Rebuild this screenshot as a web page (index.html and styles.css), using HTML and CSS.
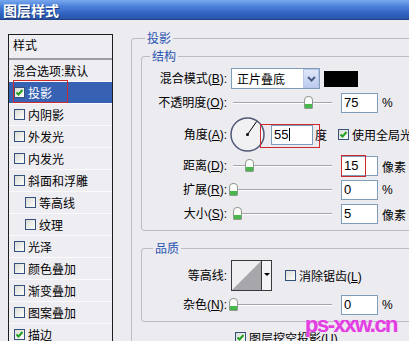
FILE: index.html
```html
<!DOCTYPE html>
<html lang="zh-CN">
<head>
  <meta charset="UTF-8" />
  <title>图层样式</title>
  <link rel="stylesheet" href="styles.css">
</head>
<body>
  <div class="titlebar">图层样式</div>

  <div class="dialog">
    <!-- 左侧样式列表 -->
    <div class="style-list">
      <div class="list-head">样式</div>
      <div class="list-row plain">混合选项:默认</div>
      <div class="list-row selected">
        <span class="chk"><svg width="9" height="9" viewBox="0 0 9 9"><path d="M1.5 4.5l2 2 4-4.5" stroke="#21a121" stroke-width="2" fill="none"/></svg></span>投影
        <span class="mark mark-list"></span>
      </div>
      <div class="list-row"><span class="chk"></span>内阴影</div>
      <div class="list-row"><span class="chk"></span>外发光</div>
      <div class="list-row"><span class="chk"></span>内发光</div>
      <div class="list-row"><span class="chk"></span>斜面和浮雕</div>
      <div class="list-row sub"><span class="chk"></span>等高线</div>
      <div class="list-row sub"><span class="chk"></span>纹理</div>
      <div class="list-row"><span class="chk"></span>光泽</div>
      <div class="list-row"><span class="chk"></span>颜色叠加</div>
      <div class="list-row"><span class="chk"></span>渐变叠加</div>
      <div class="list-row"><span class="chk"></span>图案叠加</div>
      <div class="list-row">
        <span class="chk"><svg width="9" height="9" viewBox="0 0 9 9"><path d="M1.5 4.5l2 2 4-4.5" stroke="#21a121" stroke-width="2" fill="none"/></svg></span>描边
      </div>
    </div>

    <!-- 右侧设置 -->
    <div class="panel">
      <fieldset class="group outer">
        <legend>投影</legend>

        <fieldset class="group inner">
          <legend>结构</legend>
          <div class="form">
            <label class="r1">混合模式(<u>B</u>):</label>
            <div class="ctrl r1">
              <div class="select">
                <span class="select-text">正片叠底</span>
                <span class="select-btn"><svg width="9" height="6" viewBox="0 0 9 6"><path d="M1 1l3.5 3.5L8 1" stroke="#4a5d86" stroke-width="2" fill="none"/></svg></span>
              </div>
              <span class="swatch"></span>
            </div>

            <label>不透明度(<u>O</u>):</label>
            <div class="ctrl">
              <div class="slider"><span class="thumb" style="left:75px"></span></div>
              <span class="num">75</span><span class="unit">%</span>
            </div>

            <label class="r3">角度(<u>A</u>):</label>
            <div class="ctrl r3">
              <svg class="dial" width="35" height="35" viewBox="0 0 35 35">
                <circle cx="17.5" cy="17.5" r="16.5" fill="#f1f1f3" stroke="#4f5876" stroke-width="1.5"/>
                <line x1="17.5" y1="17.5" x2="26.7" y2="4.4" stroke="#000" stroke-width="1"/>
                <circle cx="17.5" cy="17.5" r="1.5" fill="#000"/>
              </svg>
              <span class="marked">
                <span class="num wide">55<span class="caret"></span></span>
                <span class="mark mark-angle"></span>
              </span>
              <span class="deg">度</span>
              <span class="chk"><svg width="9" height="9" viewBox="0 0 9 9"><path d="M1.5 4.5l2 2 4-4.5" stroke="#21a121" stroke-width="2" fill="none"/></svg></span>
              <span class="chk-label">使用全局光</span>
            </div>

            <label>距离(<u>D</u>):</label>
            <div class="ctrl">
              <div class="slider"><span class="thumb" style="left:16px"></span></div>
              <span class="marked">
                <span class="num">15</span>
                <span class="mark mark-dist"></span>
              </span>
              <span class="unit">像素</span>
            </div>

            <label>扩展(<u>R</u>):</label>
            <div class="ctrl">
              <div class="slider"><span class="thumb" style="left:0px"></span></div>
              <span class="num">0</span><span class="unit">%</span>
            </div>

            <label>大小(<u>S</u>):</label>
            <div class="ctrl">
              <div class="slider"><span class="thumb" style="left:4px"></span></div>
              <span class="num">5</span><span class="unit">像素</span>
            </div>
          </div>
        </fieldset>

        <fieldset class="group inner quality">
          <legend>品质</legend>
          <div class="form">
            <label class="r-contour">等高线:</label>
            <div class="ctrl r-contour">
              <div class="contour">
                <svg width="29" height="29" viewBox="0 0 29 29">
                  <rect width="29" height="29" fill="#efeff1"/>
                  <polygon points="0,29 29,0 29,29" fill="#a7a7ab"/>
                </svg>
                <span class="contour-btn"></span>
              </div>
              <span class="chk aa"></span>
              <span class="chk-label">消除锯齿(<u>L</u>)</span>
            </div>

            <label>杂色(<u>N</u>):</label>
            <div class="ctrl">
              <div class="slider"><span class="thumb" style="left:0px"></span></div>
              <span class="num">0</span><span class="unit">%</span>
            </div>
          </div>
        </fieldset>

        <div class="knockout">
          <span class="chk"><svg width="9" height="9" viewBox="0 0 9 9"><path d="M1.5 4.5l2 2 4-4.5" stroke="#21a121" stroke-width="2" fill="none"/></svg></span>
          <span class="chk-label">图层挖空投影(<u>U</u>)</span>
        </div>
      </fieldset>
    </div>
  </div>

  <div class="watermark">ps-xxw.cn</div>
</body>
</html>
```

FILE: styles.css
```css
* {
  box-sizing: border-box;
}
body {
  margin: 0;
  width: 409px;
  height: 341px;
  overflow: hidden;
  position: relative;
  background: #ecebf0;
  font-family: "Liberation Sans", "Noto Sans CJK SC", sans-serif;
  font-size: 12px;
  color: #000;
}
.titlebar {
  height: 20px;
  padding: 1px 0 0 3px;
  background: linear-gradient(#78a8ee, #4a7fd8 35%, #2e60bd 75%, #2a56aa);
  border-bottom: 1px solid #22438a;
  color: #fff;
  font-family: "Noto Sans CJK SC", sans-serif;
  font-weight: bold;
  font-size: 14px;
  line-height: 18px;
  text-shadow: 1px 1px #1c3c7c;
}
.dialog {
  display: flex;
  padding: 14px 0 0 8px;
}

/* 样式列表 */
.style-list {
  flex: none;
  width: 105px;
  border: 1px solid #1e1e1e;
  border-bottom: none;
  background: #eeedf2;
}
.list-head {
  height: 25px;
  padding-left: 4px;
  line-height: 22px;
  border-bottom: 2px solid #9c9ca2;
}
.list-row {
  position: relative;
  display: flex;
  align-items: center;
  height: 22px;
  padding-left: 5px;
  border-bottom: 1px solid #fbfbfd;
  white-space: nowrap;
}
.list-row.plain {
  padding-left: 4px;
}
.list-row.sub {
  padding-left: 16px;
}
.list-row.selected {
  background: #3761b2;
  color: #fff;
}
.chk {
  flex: none;
  display: inline-flex;
  align-items: center;
  justify-content: center;
  width: 11px;
  height: 11px;
  margin-right: 3px;
  border: 1px solid #34507c;
  background: linear-gradient(135deg, #dcdcd6, #fdfdfb);
}
.mark {
  position: absolute;
  border: 1px solid #cc2a2f;
}
.mark-list {
  left: 4px;
  top: -2px;
  width: 55px;
  height: 23px;
}

/* 右侧 */
.panel {
  flex: none;
  width: 300px;
  margin: -3px 0 0 18px;
}
.group {
  margin: 0;
  min-width: 0;
  border: 1px solid #bdbcc3;
  border-radius: 3px;
}
.group legend {
  padding: 0 2px;
  line-height: 14px;
  color: #2a55b0;
  font-family: "Noto Sans CJK SC", sans-serif;
}
.outer {
  padding: 4px 0 0 9px;
  height: 340px;
}
.outer > legend {
  margin-left: 4px;
}
.inner {
  padding: 5px 0 6px 1px;
}
.inner > legend {
  margin-left: 7px;
}
.quality {
  margin-top: 10px;
}
.quality > legend {
  margin-left: 10px;
}
.form {
  display: grid;
  grid-template-columns: 84px 1fr;
  column-gap: 2px;
  row-gap: 4px;
  align-items: center;
}
.form label {
  height: 20px;
  line-height: 20px;
  text-align: right;
  white-space: nowrap;
}
.ctrl {
  display: flex;
  align-items: center;
  height: 20px;
  white-space: nowrap;
}
.ctrl.r1 {
  height: 21px;
}
.ctrl.r3 {
  height: 35px;
}
.ctrl.r-contour {
  height: 31px;
}

.select {
  display: flex;
  align-items: center;
  width: 89px;
  height: 21px;
  margin-left: 2px;
  border: 1px solid #7f9db9;
  background: #fff;
}
.select-text {
  padding-left: 5px;
}
.select-btn {
  display: flex;
  align-items: center;
  justify-content: center;
  width: 16px;
  height: 19px;
  margin-left: auto;
  border: 1px solid #b9c7ea;
  background: linear-gradient(#dfe6f8, #bccbf0);
}
.swatch {
  width: 34px;
  height: 16px;
  margin-left: 4px;
  background: #000;
}

.slider {
  position: relative;
  flex: none;
  width: 103px;
  height: 20px;
}
.slider::before {
  content: "";
  position: absolute;
  left: 4px;
  right: 0;
  top: 9px;
  border-top: 1px solid #a4a4aa;
  border-bottom: 1px solid #fff;
}
.thumb {
  position: absolute;
  top: 3px;
  width: 9px;
  height: 13px;
  border: 1px solid #8d9a90;
  border-radius: 4px 4px 1px 1px;
  background: linear-gradient(#fbfbf8 62%, #48b84a 62%);
}
.num {
  display: inline-block;
  width: 37px;
  height: 20px;
  margin-left: 9px;
  padding-left: 2px;
  line-height: 18px;
  font-size: 13px;
  border: 1px solid #7f9db9;
  background: #fff;
}
.num.wide {
  width: 42px;
  margin-left: 0;
  font-size: 13px;
}
.caret {
  display: inline-block;
  width: 1px;
  height: 13px;
  margin-left: 1px;
  vertical-align: -2px;
  background: #000;
}
.unit {
  margin-left: 4px;
}
.marked {
  position: relative;
  display: inline-flex;
}
.mark-dist {
  left: 9px;
  top: -1px;
  width: 25px;
  height: 22px;
}
.mark-angle {
  left: -11px;
  top: -1px;
  width: 60px;
  height: 24px;
}
.dial {
  flex: none;
  margin: 0 6px 0 1px;
}
.deg {
  margin: 0 11px 0 2px;
}
.chk-label {
  margin-left: 0;
}

.contour {
  display: flex;
  width: 41px;
  height: 31px;
  margin-left: 2px;
  border: 1px solid #3a3a3e;
  background: #fff;
}
.contour-btn {
  position: relative;
  flex: 1;
  border-left: 1px solid #3a3a3e;
  background: #f4f4f6;
}
.contour-btn::after {
  content: "";
  position: absolute;
  left: 2px;
  top: 12px;
  border-left: 3px solid transparent;
  border-right: 3px solid transparent;
  border-top: 3px solid #000;
}
.chk.aa {
  margin-left: 13px;
}

.knockout {
  display: flex;
  align-items: center;
  margin: 7px 0 0 94px;
  white-space: nowrap;
}

.watermark {
  position: absolute;
  left: 305px;
  top: 312px;
  font-family: "Liberation Sans", sans-serif;
  font-weight: bold;
  font-size: 22px;
  letter-spacing: -1.5px;
  color: #e23fe2;
  text-shadow: 0 0 1px #f5a8f5;
}
```
